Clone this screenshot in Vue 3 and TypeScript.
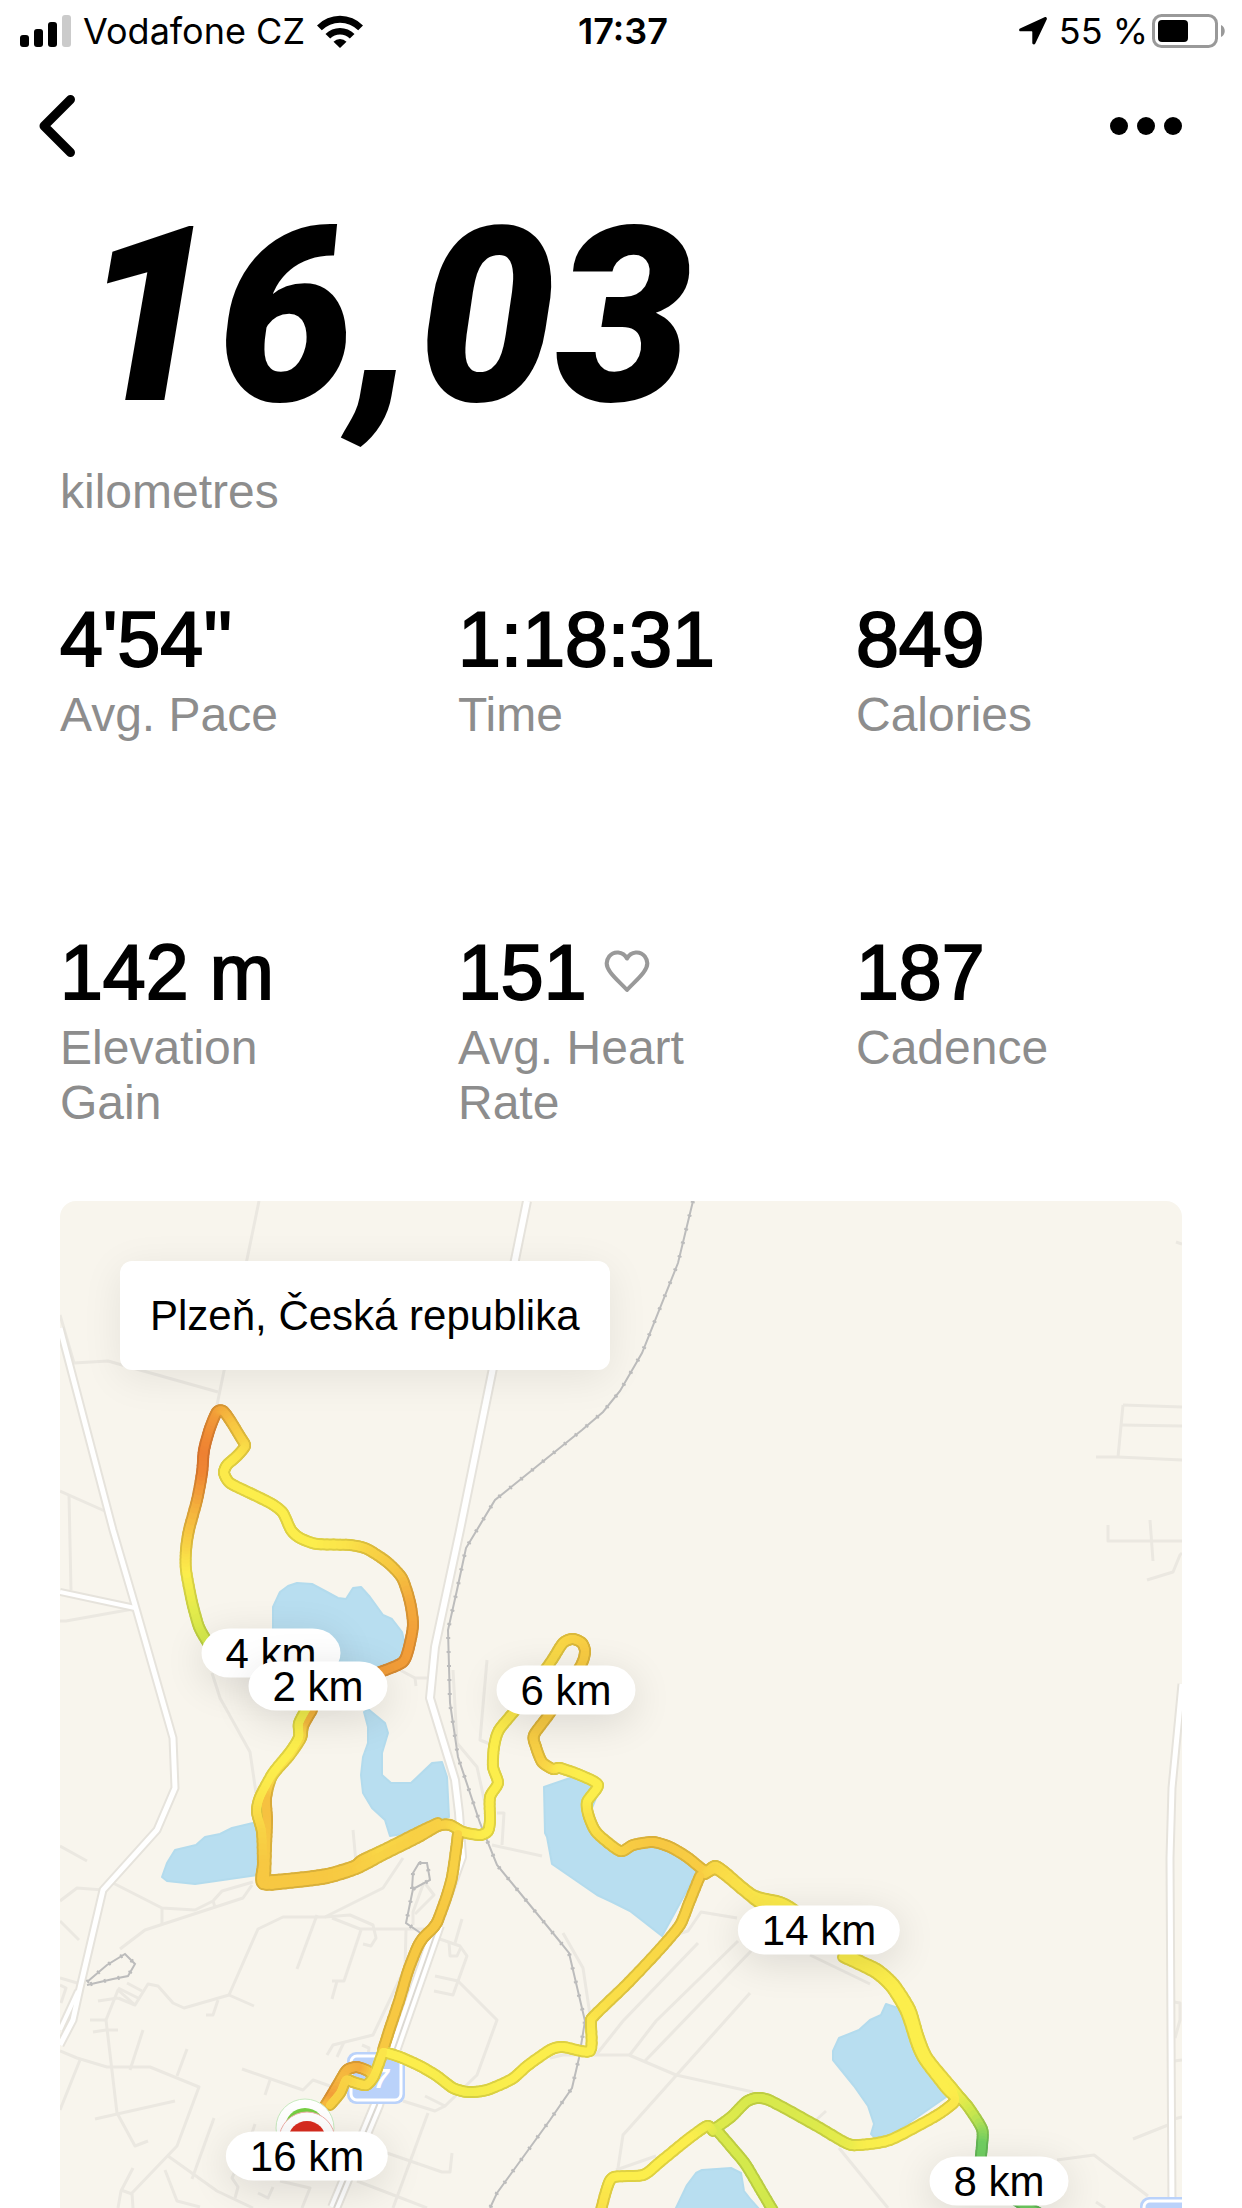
<script setup lang="ts">
type Point = [x: number, y: number]
type RoutePoint = [x: number, y: number, pace: number]
type Rgb = [number, number, number]

interface Stat {
  value: string
  label: string
  heart?: boolean
}

interface Pin {
  label: string
  x: number
  y: number
}

const stats: Stat[] = [
  { value: "4'54''", label: 'Avg. Pace' },
  { value: '1:18:31', label: 'Time' },
  { value: '849', label: 'Calories' },
  { value: '142 m', label: 'Elevation Gain' },
  { value: '151', label: 'Avg. Heart Rate', heart: true },
  { value: '187', label: 'Cadence' },
]

// Map space: x 60..1182, y 1201..2208
const MAP = { x: 60, y: 1201, w: 1122, h: 1007 }

// Pin centres; later entries lie over earlier ones
const pins: Pin[] = [
  { label: '4 km', x: 271, y: 1653 },
  { label: '2 km', x: 318, y: 1686 },
  { label: '6 km', x: 566, y: 1690 },
  { label: '14 km', x: 819, y: 1930 },
  { label: '8 km', x: 999, y: 2181 },
  { label: '16 km', x: 307, y: 2156 },
]

const pinStyle = (p: Pin) => ({
  left: `${((p.x - MAP.x) / MAP.w) * 100}%`,
  top: `${((p.y - MAP.y) / MAP.h) * 100}%`,
})

const lakes: string[] = [
  '273,1607 280,1592 288,1586 297,1583 312,1584 327,1592 338,1598 346,1599 353,1588 361,1587 370,1597 383,1615 392,1619 402,1632 405,1645 400,1662 378,1666 350,1668 300,1660 273,1630',
  '368,1709 385,1723 388,1733 382,1753 382,1775 391,1783 411,1783 432,1763 442,1762 447,1777 449,1817 423,1825 403,1834 390,1836 385,1820 372,1808 363,1793 361,1775 363,1757 368,1743 368,1727 364,1712',
  '253,1823 232,1828 220,1834 205,1837 196,1845 175,1850 167,1863 162,1877 167,1881 195,1884 258,1875 258,1830',
  '544,1787 570,1778 590,1780 598,1793 590,1813 597,1833 620,1852 653,1843 675,1852 697,1872 662,1936 630,1911 612,1902 597,1895 552,1864 547,1837 545,1833',
  '886,2004 898,2008 910,2035 923,2061 949,2095 890,2136 874,2137 871,2134 874,2124 868,2106 854,2086 833,2060 833,2051 839,2038 859,2030 870,2020 881,2015',
  '675,2210 687,2185 696,2173 702,2170 731,2168 741,2173 744,2191 751,2200 760,2210',
]

const lanes: string[] = [
  '259,1201 217,1405',
  '60,1315 74,1363 108,1361 218,1392',
  '60,1491 107,1512',
  '69,1495 71,1590',
  '60,1621 66,1621 133,1609',
  '60,1846 87,1861',
  '212,1673 220,1698 250,1752 256,1793',
  '353,1830 356,1863',
  '487,1660 480,1740 490,1744',
  '453,1670 457,1743 477,1767 488,1817',
  '400,1670 415,1678 430,1678',
  '415,1678 416,1686',
  '497,1813 504,1813 502,1845',
  '492,1845 542,1856',
  '678,1934 688,1931 701,1912 737,1918',
  '60,1901 77,1888 103,1890',
  '113,1883 162,1908 195,1910 213,1901 222,1891 253,1882',
  '162,1908 162,1924',
  '120,1949 145,1930 243,1898 252,1885',
  '213,1901 215,1907',
  '60,1921 79,1940',
  '60,1978 84,1985',
  '60,1985 66,1988 61,2003',
  '229,1995 258,1929 283,1917 325,1917 383,1888 403,1858',
  '317,1915 297,1969',
  '325,1917 350,1915 373,1925 376,1938 371,1946 363,1944',
  '332,1918 360,1929 433,1929',
  '361,1930 344,1981 332,1981',
  '337,1981 332,1999',
  '106,2020 118,1990 135,2005 148,1984 158,1986 173,2003 184,2008 229,1995 254,2006',
  '118,1988 140,1999',
  '127,1983 142,1991',
  '118,1998 135,2005',
  '218,2000 213,2015 206,2015',
  '98,2001 118,1998',
  '90,2020 106,2020',
  '93,2032 106,2030 118,2030',
  '106,2020 117,2113 135,2146 148,2141',
  '60,2051 77,2058 107,2067 150,2067 199,2087 177,2146 132,2193 133,2208',
  '143,2030 130,2070',
  '187,2049 177,2076',
  '80,2060 60,2110',
  '95,2119 175,2101',
  '214,2118 192,2179',
  '168,2156 217,2191 253,2208',
  '165,2170 177,2201 200,2207',
  '133,2168 121,2191 118,2208',
  '121,2190 132,2194',
  '242,2069 303,2090 313,2080 330,2086',
  '270,2080 265,2095',
  '406,1930 405,1968 373,2035 333,2045 327,2055',
  '344,2042 337,2057',
  '362,2045 369,2048 368,2056',
  '424,1882 434,1895 415,1914',
  '424,1882 413,1912 413,1925',
  '437,1938 460,1946 467,1956 453,1995 434,1991',
  '449,1942 450,1956 457,1956 461,1947',
  '462,1919 455,1943',
  '435,1976 458,1981 497,2020 477,2075 445,2106 425,2096',
  '403,2101 435,2111 445,2106',
  '428,2113 393,2208',
  '387,2153 442,2172 450,2172 452,2153',
  '357,2181 427,2208',
  '280,2181 310,2188 302,2208',
  '238,2165 232,2178 238,2187 235,2198',
  '258,2193 268,2198 273,2187',
  '255,2124 248,2145',
  '698,1943 623,2021 596,2055',
  '738,1941 656,2021 629,2056',
  '751,1951 645,2061',
  '750,1993 623,2135 618,2168',
  '550,2058 563,2055 629,2055 676,2075 753,2092',
  '810,1955 870,1984',
  '839,2148 888,2208',
  '826,2111 815,2121',
  '616,2170 656,2156',
  '563,1933 583,1968 590,2015',
  '1057,2160 1094,2155 1148,2196',
  '1133,2139 1168,2125',
  '1096,2202 1105,2208',
  '1174,2002 1180,2003 1180,2020 1175,2038',
  '1174,2061 1182,2060',
  '1174,2119 1182,2117',
  '1123,1405 1182,1407',
  '1122,1425 1182,1426',
  '1096,1457 1118,1457 1182,1460',
  '1123,1405 1118,1457',
  '1108,1525 1108,1541 1182,1541',
  '1150,1520 1153,1561',
  '1147,1580 1173,1572 1180,1555 1182,1553',
  '1176,1242 1182,1244',
]

const roads: { points: string; width: number; twin?: boolean }[] = [
  { points: '60,1328 113,1530 135,1605 173,1738 175,1788 157,1830 103,1890 80,1988 73,2020 60,2045', width: 5 },
  { points: '60,1592 135,1608', width: 4 },
  { points: '78,1991 60,2030', width: 4 },
  { points: '527,1201 460,1530 435,1647 430,1698 455,1780 459,1813 462,1857 433,1938', width: 6 },
  { points: '438,1925 395,2048 377,2105 334,2208', width: 10, twin: true },
  { points: '1182,1684 1172,1788 1170,1858 1172,2208', width: 5 },
]

const rails: string[] = [
  '693,1201 678,1263 642,1353 620,1391 603,1412 582,1430 495,1500 466,1548 457,1590 448,1630 450,1703 458,1757 480,1823 497,1865 557,1938 569,1953 585,2021 579,2058 572,2088 550,2120 497,2193 490,2208',
  '412,1889 413,1873 419,1863 427,1863 430,1880 413,1889 406,1923 422,1934',
  '87,1982 107,1965 125,1954 135,1964 128,1976 113,1979 87,1985',
]

// Pace scale: 0 = green, 1 = lime, 2 = yellow, 3 = amber, 4 = orange
const palette: Rgb[] = [
  [112, 207, 98],
  [207, 232, 76],
  [252, 238, 76],
  [247, 200, 66],
  [238, 128, 50],
]

const legs: RoutePoint[][] = [
  [
    [208, 1643, 1], [199, 1627, 1.2], [192, 1602, 1.5], [186, 1570, 2], [186, 1550, 2.5], [189, 1530, 3],
    [197, 1500, 3.4], [202, 1473, 3.9], [204, 1450, 4], [210, 1428, 3.8], [217, 1412, 3.6], [223, 1411, 3.4],
    [230, 1420, 3.2], [241, 1438, 2.8], [245, 1446, 2.6], [237, 1456, 2.3], [227, 1465, 2.1], [224, 1473, 2.1],
    [230, 1483, 2.1], [250, 1493, 2], [272, 1504, 2], [283, 1513, 2], [291, 1530, 2], [300, 1538, 2],
    [317, 1544, 2], [350, 1545, 2.3], [367, 1549, 2.6], [387, 1562, 2.9], [402, 1578, 3.1], [410, 1602, 3.4],
    [413, 1625, 3.5], [409, 1647, 3.6], [403, 1662, 3.6], [383, 1671, 3.6], [363, 1678, 3.6],
  ],
  [[312, 1710, 3.3], [303, 1726, 3.2], [301, 1738, 2.6], [289, 1756, 2.3], [272, 1776, 2.5], [266, 1798, 3.1], [267, 1820, 3.1], [266, 1845, 3], [265, 1880, 3]],
  [[263, 1881, 3], [297, 1878, 3], [327, 1874, 3], [354, 1866, 2.9], [362, 1860, 2.9], [383, 1850, 2.6], [417, 1833, 2.8], [438, 1823, 2.8]],
  [
    [308, 1706, 1.7], [299, 1723, 1.8], [299, 1737, 2], [290, 1752, 2], [273, 1773, 2], [260, 1797, 2.2],
    [257, 1812, 2.4], [262, 1832, 2.7], [263, 1863, 3], [263, 1884, 3], [297, 1882, 3], [327, 1878, 3],
    [356, 1869, 2.9], [383, 1855, 2.7], [417, 1838, 2.8], [438, 1826, 2.8], [450, 1825, 2.7], [463, 1832, 2.3],
    [480, 1835, 2.1], [488, 1831, 2], [490, 1820, 2], [490, 1797, 2], [498, 1783, 2], [493, 1767, 2],
    [494, 1747, 2], [499, 1730, 2], [517, 1708, 2.2], [550, 1663, 2.5], [563, 1643, 2.6], [573, 1639, 2.7],
    [582, 1643, 2.8], [585, 1652, 2.9], [580, 1667, 2.9], [550, 1713, 3], [534, 1735, 2.9], [536, 1747, 2.8],
    [542, 1762, 2.8], [553, 1769, 2.5], [560, 1768, 2.2], [580, 1775, 2], [598, 1785, 2], [587, 1802, 2],
    [589, 1817, 2.3], [597, 1833, 2.4], [620, 1851, 2.7], [633, 1845, 2.9], [653, 1842, 3], [670, 1847, 3],
    [687, 1857, 2.9], [702, 1869, 2.9], [707, 1871, 2.8], [715, 1866, 2.6], [725, 1872, 2.5], [753, 1895, 2.2],
    [780, 1902, 2.1], [797, 1912, 2], [850, 1955, 2], [877, 1969, 2], [894, 1984, 2], [910, 2009, 2],
    [918, 2035, 2], [927, 2057, 2], [949, 2084, 2], [958, 2095, 1.8], [969, 2108, 1.2], [982, 2129, 0.5],
    [982, 2145, 0], [980, 2165, 0],
  ],
  [[705, 1874, 2.8], [715, 1869, 2.6], [725, 1875, 2.5], [758, 1902, 2.2], [775, 1906, 2.1], [790, 1912, 2]],
  [[843, 1957, 2], [874, 1972, 2], [891, 1987, 2], [906, 2012, 2], [917, 2045, 2], [925, 2061, 2], [945, 2087, 2], [953, 2095, 2]],
  [[1010, 2196, 0], [1022, 2204, 0], [1040, 2214, 0]],
  [
    [458, 1834, 2.7], [456, 1850, 2.8], [452, 1877, 2.8], [447, 1895, 2.9], [438, 1920, 3], [433, 1928, 3],
    [423, 1938, 3], [417, 1948, 3], [408, 1971, 3], [400, 1998, 3], [390, 2028, 3], [383, 2050, 3],
  ],
  [
    [700, 1876, 2.9], [689, 1903, 2.8], [680, 1925, 2.7], [660, 1949, 2.6], [629, 1982, 2.5], [594, 2016, 2.3],
    [591, 2023, 2.2], [590, 2051, 2], [563, 2047, 2], [550, 2050, 2], [527, 2066, 2], [512, 2079, 2],
    [487, 2090, 1.9], [468, 2092, 1.8], [453, 2088, 1.9], [437, 2076, 1.9], [420, 2066, 2], [400, 2057, 2], [384, 2052, 2],
  ],
  [[374, 2076, 2.8], [368, 2071, 2.9], [357, 2067, 3.4], [347, 2070, 3.3], [340, 2081, 3.2], [330, 2098, 3.6], [325, 2106, 3.2]],
  [[383, 2052, 2.2], [374, 2076, 2.3], [366, 2085, 2.4], [353, 2082, 2.5], [346, 2080, 2.7], [340, 2093, 2.8], [330, 2105, 2.8]],
  [
    [952, 2090, 2], [955, 2100, 2.1], [950, 2106, 2.2], [934, 2117, 2.1], [890, 2140, 2], [859, 2145, 1.9],
    [846, 2143, 1.6], [815, 2125, 1.3], [771, 2101, 1.2], [757, 2098, 1.2], [746, 2102, 1.2], [731, 2117, 1.3],
    [713, 2130, 1.3],
  ],
  [[715, 2128, 1.2], [733, 2149, 1.2], [746, 2165, 1.1], [762, 2192, 1.1], [775, 2214, 1]],
  [
    [713, 2131, 1.3], [707, 2126, 1.6], [687, 2140, 2], [660, 2162, 2], [643, 2175, 2], [614, 2177, 2],
    [607, 2188, 2.1], [600, 2214, 2.4],
  ],
]

function shade(pace: number, darken: number): string {
  const i = Math.min(Math.floor(pace), palette.length - 2)
  const f = pace - i
  const c = palette[i].map((v, k) => Math.round((v + (palette[i + 1][k] - v) * f) * darken))
  return `rgb(${c.join(',')})`
}

// Hermite curve through the points, cut into short pieces so the colour can follow the pace
function pieces(leg: RoutePoint[]) {
  const STEPS = 6
  const TENSION = 0.36
  const at = (i: number) => leg[Math.max(0, Math.min(leg.length - 1, i))]
  const out: { d: string; fill: string; edge: string }[] = []
  for (let i = 0; i < leg.length - 1; i++) {
    const [p0, p1, p2, p3] = [at(i - 1), at(i), at(i + 1), at(i + 2)]
    const spot = (t: number): Point => {
      const t2 = t * t
      const t3 = t2 * t
      const axis = (k: 0 | 1) =>
        (2 * t3 - 3 * t2 + 1) * p1[k] +
        (t3 - 2 * t2 + t) * TENSION * (p2[k] - p0[k]) +
        (3 * t2 - 2 * t3) * p2[k] +
        (t3 - t2) * TENSION * (p3[k] - p1[k])
      return [axis(0), axis(1)]
    }
    for (let s = 0; s < STEPS; s++) {
      const a = spot(s / STEPS)
      const b = spot((s + 1) / STEPS)
      const pace = p1[2] + (p2[2] - p1[2]) * ((s + 0.5) / STEPS)
      out.push({
        d: `M${a[0].toFixed(1)} ${a[1].toFixed(1)}L${b[0].toFixed(1)} ${b[1].toFixed(1)}`,
        fill: shade(pace, 1),
        edge: shade(pace, 0.88),
      })
    }
  }
  return out
}

const route = legs.flatMap(pieces)
</script>

<template>
  <div class="screen">
    <header class="status">
      <div class="status-side">
        <svg class="signal" width="51" height="32" viewBox="0 0 51 32" aria-hidden="true">
          <rect x="0" y="20" width="9" height="12" rx="3" />
          <rect x="14" y="14" width="9" height="18" rx="3" />
          <rect x="28" y="7" width="9" height="25" rx="3" />
          <rect x="42" y="0" width="9" height="32" rx="3" fill="#cbcbcb" />
        </svg>
        <span>Vodafone CZ</span>
        <svg width="46" height="33" viewBox="0 0 46 33" aria-hidden="true">
          <path d="M0 10.500a32 32 0 0 1 46 0l-4.800 4.800a25.500 25.500 0 0 0-36.400 0z" />
          <path d="M8.500 19a20.500 20.500 0 0 1 29 0l-4.700 4.500a14 14 0 0 0-19.600 0z" />
          <path d="M16.500 26.800a9.200 9.200 0 0 1 13 0L23 33z" />
        </svg>
      </div>
      <time class="clock">17:37</time>
      <div class="status-side status-right">
        <svg class="arrow" width="28" height="28" viewBox="0 0 28 28" aria-hidden="true">
          <path d="M25.500 0.300 1 11.500C-.4 12.200 0 14.300 1.500 14.300H12.700c.4 0 .6.2.6.6V26c0 1.600 2.300 2 3 .5L27.700 2.500c.7-1.500-.7-2.900-2.200-2.200z" />
        </svg>
        <span>55 %</span>
        <svg width="74" height="34" viewBox="0 0 74 34" aria-hidden="true">
          <rect x="1.500" y="1.500" width="63" height="31" rx="8" fill="none" stroke="#999" stroke-width="3" />
          <rect x="6" y="6" width="30" height="22" rx="4" />
          <path d="M69 11c5 2 5 10 0 12z" fill="#999" />
        </svg>
      </div>
    </header>

    <nav class="bar">
      <button type="button" class="icon-button" aria-label="Back">
        <svg width="38" height="64" viewBox="0 0 38 64">
          <path d="M32.500 5.500 6 32l26.500 26.500" fill="none" stroke="#000" stroke-width="9" stroke-linecap="round" stroke-linejoin="round" />
        </svg>
      </button>
      <button type="button" class="icon-button" aria-label="More">
        <svg width="72" height="18" viewBox="0 0 72 18">
          <circle cx="9" cy="9" r="9" />
          <circle cx="36" cy="9" r="9" />
          <circle cx="63" cy="9" r="9" />
        </svg>
      </button>
    </nav>

    <main class="content">
      <h1 class="distance">16,03</h1>
      <p class="label">kilometres</p>

      <dl class="stats">
        <div v-for="s in stats" :key="s.label" class="stat">
          <dd class="value">
            {{ s.value }}
            <svg v-if="s.heart" class="heart" width="46" height="44" viewBox="0 0 46 44" aria-hidden="true">
              <path d="M23 8.500C19 .8 9.500.8 5.300 6.300 1.300 11.500 2.500 17.500 6.500 22.500 11 28.500 17 33.500 23 40c6-6.500 12-11.500 16.500-17.500 4-5 5.200-11 1.200-16.200C36.500.8 27 .8 23 8.500z" fill="none" stroke="#999" stroke-width="4" stroke-linejoin="round" />
            </svg>
          </dd>
          <dt class="label">{{ s.label }}</dt>
        </div>
      </dl>

      <section class="map" aria-label="Route map">
        <svg class="map-art" viewBox="60 1201 1122 1007" aria-hidden="true">
          <g fill="none" stroke="#ebe8e1" stroke-width="3" stroke-linejoin="round">
            <polyline v-for="(l, i) in lanes" :key="i" :points="l" />
          </g>
          <g fill="#b8def0" stroke="#b3dbed" stroke-width="2" stroke-linejoin="round">
            <polygon v-for="(l, i) in lakes" :key="i" :points="l" />
          </g>
          <g fill="none" stroke-linejoin="round">
            <polyline v-for="(r, i) in roads" :key="i" :points="r.points" stroke="#e6e3dc" :stroke-width="r.width + 4" />
            <polyline v-for="(r, i) in roads" :key="i" :points="r.points" stroke="#fff" :stroke-width="r.width" />
            <template v-for="(r, i) in roads" :key="i">
              <polyline v-if="r.twin" :points="r.points" stroke="#dcd9d3" stroke-width="2" />
            </template>
          </g>
          <g fill="none" stroke="#bcbcbc">
            <polyline v-for="(r, i) in rails" :key="i" :points="r" stroke-width="2" />
            <polyline v-for="(r, i) in rails" :key="i" :points="r" stroke-width="4" stroke-dasharray="2 12" />
          </g>
          <g>
            <rect x="347" y="2052" width="58" height="52" rx="9" fill="#bad2fa" />
            <rect x="351" y="2056" width="50" height="44" rx="6" fill="none" stroke="#fff" stroke-width="3" />
            <text class="shield" x="374" y="2088" text-anchor="middle">27</text>
            <rect x="1140" y="2197" width="58" height="52" rx="9" fill="#bad2fa" />
            <rect x="1144" y="2201" width="50" height="44" rx="6" fill="none" stroke="#fff" stroke-width="3" />
          </g>
          <g fill="none" stroke-linecap="round">
            <path v-for="(p, k) in route" :key="k" :d="p.d" :stroke="p.edge" stroke-width="12" />
            <path v-for="(p, k) in route" :key="k" :d="p.d" :stroke="p.fill" stroke-width="8" />
          </g>
          <circle cx="305" cy="2128" r="29" fill="#fff" stroke="#c9ebc0" />
          <circle cx="305" cy="2128" r="20" fill="#76cf43" />
          <circle cx="307" cy="2140" r="28" fill="#fff" stroke="#f0b0aa" />
          <circle cx="307" cy="2140" r="19" fill="#d92c1f" />
        </svg>
        <span v-for="p in pins" :key="p.label" class="pin" :style="pinStyle(p)">{{ p.label }}</span>
        <div class="place">Plzeň, Česká republika</div>
      </section>
    </main>
  </div>
</template>

<style>
body {
  margin: 0;
  background: #fff;
}
</style>

<style scoped>
.screen {
  font-family: "Liberation Sans", Arial, sans-serif;
  color: #000;
  background: #fff;
  overflow: hidden;
}

.status {
  display: grid;
  grid-template-columns: 1fr auto 1fr;
  align-items: center;
  height: 62px;
  padding: 0 16px 0 20px;
  font-family: Inter, "Liberation Sans", sans-serif;
  font-size: 36px;
}

.status-side {
  display: flex;
  align-items: center;
  gap: 12px;
}

.status-right {
  justify-content: flex-end;
  gap: 4px;
}

.arrow {
  margin-right: 8px;
}

.clock {
  font-weight: 600;
}

.bar {
  display: flex;
  align-items: center;
  justify-content: space-between;
  height: 128px;
  padding: 0 60px 0 38px;
}

.icon-button {
  display: flex;
  padding: 0;
  border: 0;
  background: none;
  cursor: pointer;
}

.content {
  padding: 0 60px;
}

.distance {
  margin: 0;
  padding: 0 0 20px 20px;
  font-family: Roboto, "Liberation Sans", sans-serif;
  font-size: 244px;
  font-style: italic;
  font-weight: 900;
  line-height: 254px;
}

.label {
  margin: 0;
  color: #8d8d8d;
  font-size: 48px;
  line-height: 55px;
}

.stats {
  display: grid;
  grid-template-columns: repeat(3, 1fr);
  gap: 190px 72px;
  margin: 80px 0 71px;
}

.stat {
  display: flex;
  flex-direction: column;
  gap: 8px;
  padding-right: 60px;
}

.value {
  display: flex;
  align-items: center;
  gap: 18px;
  margin: 0;
  font-size: 77px;
  line-height: 80px;
  white-space: nowrap;
  -webkit-text-stroke: 2px #000;
}

.map {
  position: relative;
  overflow: hidden;
  aspect-ratio: 1122 / 1007;
  border-radius: 16px 16px 0 0;
  background: #f8f5ed;
}

.map-art {
  display: block;
  width: 100%;
}

.shield {
  fill: #fff;
  font-size: 27px;
  font-style: italic;
  font-weight: 700;
}

.place {
  position: absolute;
  top: 60px;
  left: 60px;
  padding: 0 30px;
  border-radius: 12px;
  background: #fff;
  box-shadow: 0 8px 40px rgba(0, 0, 0, 0.08);
  font-size: 42px;
  line-height: 109px;
}

.pin {
  position: absolute;
  padding: 0 24px;
  border-radius: 28px / 50%;
  background: #fff;
  box-shadow: 0 8px 40px rgba(0, 0, 0, 0.12);
  font-size: 42px;
  line-height: 49px;
  white-space: nowrap;
  transform: translate(-50%, -50%);
}
</style>
